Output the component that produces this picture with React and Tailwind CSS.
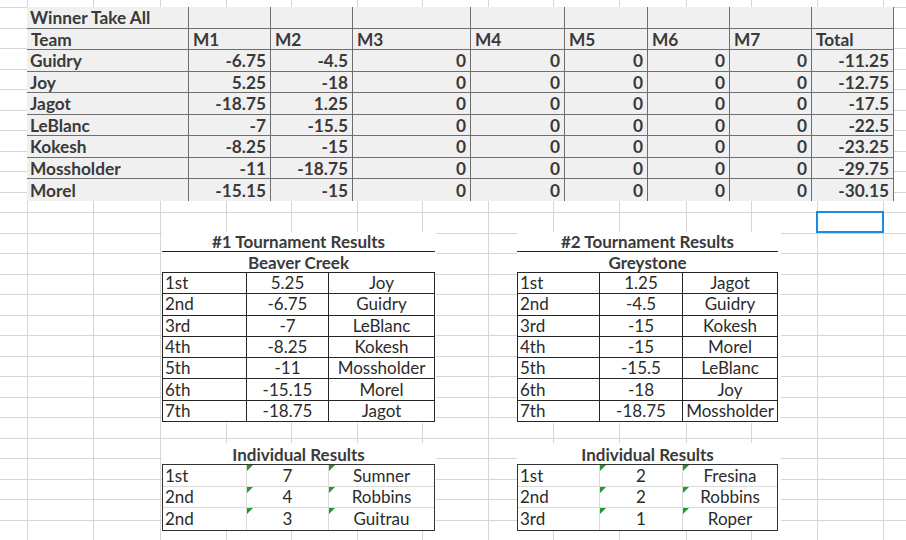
const sheetCols = [28, 66, 67, 66, 65, 66, 65, 66, 65, 66, 67, 65, 66, 66, 40];
const sheetRows = 27;

const winners = [
    ['Guidry', '-6.75', '-4.5', '-11.25'],
    ['Joy', '5.25', '-18', '-12.75'],
    ['Jagot', '-18.75', '1.25', '-17.5'],
    ['LeBlanc', '-7', '-15.5', '-22.5'],
    ['Kokesh', '-8.25', '-15', '-23.25'],
    ['Mossholder', '-11', '-18.75', '-29.75'],
    ['Morel', '-15.15', '-15', '-30.15'],
];

const tournaments = [
    {
        title: '#1 Tournament Results',
        course: 'Beaver Creek',
        cols: 'grid-cols-[84px_82px_106px]',
        width: 'w-[273px]',
        panel: 'w-[274px]',
        rows: [
            ['1st', '5.25', 'Joy'],
            ['2nd', '-6.75', 'Guidry'],
            ['3rd', '-7', 'LeBlanc'],
            ['4th', '-8.25', 'Kokesh'],
            ['5th', '-11', 'Mossholder'],
            ['6th', '-15.15', 'Morel'],
            ['7th', '-18.75', 'Jagot'],
        ],
        indivCols: 'grid-cols-[84px_82px_105px]',
        individual: [
            ['1st', '7', 'Sumner'],
            ['2nd', '4', 'Robbins'],
            ['2nd', '3', 'Guitrau'],
        ],
    },
    {
        title: '#2 Tournament Results',
        course: 'Greystone',
        cols: 'grid-cols-[82px_83px_95px]',
        width: 'w-[261px]',
        panel: 'w-[264px]',
        rows: [
            ['1st', '1.25', 'Jagot'],
            ['2nd', '-4.5', 'Guidry'],
            ['3rd', '-15', 'Kokesh'],
            ['4th', '-15', 'Morel'],
            ['5th', '-15.5', 'LeBlanc'],
            ['6th', '-18', 'Joy'],
            ['7th', '-18.75', 'Mossholder'],
        ],
        indivCols: 'grid-cols-[82px_83px_94px]',
        individual: [
            ['1st', '2', 'Fresina'],
            ['2nd', '2', 'Robbins'],
            ['3rd', '1', 'Roper'],
        ],
    },
];

// excel's little "number stored as text" marker
const GreenFlag = () => (
    <span className="absolute left-0 top-0 h-0 w-0 border-t-[6px] border-r-[6px] border-t-[#1e9a2e] border-r-transparent" />
);

const SheetGrid = () => (
    <div className="absolute inset-0 grid grid-cols-[28px_66px_67px_66px_65px_66px_65px_66px_65px_66px_67px_65px_66px_66px_40px] grid-rows-[8px_repeat(26,20.5px)]">
        {Array.from({ length: sheetRows * sheetCols.length }).map((_, i) => (
            <div key={i} className="border-b border-r border-[#d6d6d6]" />
        ))}
    </div>
);

const WinnerTable = () => {
    const head = ['Team', 'M1', 'M2', 'M3', 'M4', 'M5', 'M6', 'M7', 'Total'];

    return (
        <div className="ml-[27px] mt-[7px] grid w-[867px] grid-cols-[162px_82px_82px_118px_94px_83px_82px_82px_82px] bg-[#f0f0f0] text-[17.3px] font-bold text-[#3a3a3a]">
            <div className="flex h-[21.5px] items-end border-b border-r border-[#6e6e6e] pb-[1px] pl-[3px]">Winner Take All</div>
            {head.slice(1).map(h => (
                <div key={h} className="h-[21.5px] border-b border-r border-[#6e6e6e]" />
            ))}

            {head.map(h => (
                <div key={h} className="flex h-[21.5px] items-end border-b border-r border-[#6e6e6e] pb-[1px] pl-[4px]">
                    {h}
                </div>
            ))}

            {winners.map(([name, m1, m2, total], r) => {
                const last = r === winners.length - 1;
                const edge = last ? 'border-r' : 'border-b border-r';
                const cells = [m1, m2, '0', '0', '0', '0', '0', total];
                return [
                    <div key={name} className={`flex h-[21.5px] items-end ${edge} border-[#6e6e6e] pb-[1px] pl-[3px]`}>
                        {name}
                    </div>,
                    ...cells.map((v, c) => (
                        <div
                            key={name + c}
                            className={`flex h-[21.5px] items-end justify-end ${edge} border-[#6e6e6e] pb-[1px] pr-[4px]`}
                        >
                            {v}
                        </div>
                    )),
                ];
            })}
        </div>
    );
};

const Tournament = ({ t }) => (
    <div className={t.panel}>
        <div className="h-[191px] bg-white">
            <div className={`flex h-[20px] ${t.width} items-center justify-center border-b border-[#262626] font-bold text-[#3a3a3a]`}>
                {t.title}
            </div>
            <div className={`flex h-[20px] ${t.width} items-center justify-center font-bold text-[#3a3a3a]`}>
                {t.course}
            </div>
            <div className={`grid ${t.width} ${t.cols} border-l border-t border-[#262626]`}>
                {t.rows.map(([place, score, name]) => [
                    <div key={place} className="flex h-[21.3px] items-center border-b border-r border-[#262626] pb-[1px] pl-[2px]">
                        {place}
                    </div>,
                    <div key={place + 's'} className="flex h-[21.3px] items-center justify-center border-b border-r border-[#262626] pb-[1px]">
                        {score}
                    </div>,
                    <div key={place + 'n'} className="flex h-[21.3px] items-center justify-center whitespace-nowrap border-b border-r border-[#262626] pb-[1px]">
                        {name}
                    </div>,
                ])}
            </div>
        </div>

        <div className="mt-[20px] h-[88px] bg-white">
            <div className={`flex h-[21px] ${t.width} items-end justify-center pb-[1px] font-bold text-[#3a3a3a]`}>
                Individual Results
            </div>
            <div className={`grid ${t.width} ${t.indivCols} border border-[#333]`}>
                {t.individual.map(([place, score, name], r) => {
                    const line = r < 2 ? 'border-b' : '';
                    return [
                        <div key={r} className={`flex h-[21.5px] items-center ${line} border-r border-[#dadada] pl-[2px]`}>
                            {place}
                        </div>,
                        <div key={r + 's'} className={`relative flex h-[21.5px] items-center justify-center ${line} border-r border-[#dadada]`}>
                            <GreenFlag />
                            {score}
                        </div>,
                        <div key={r + 'n'} className={`relative flex h-[21.5px] items-center justify-center ${line} border-[#dadada]`}>
                            <GreenFlag />
                            {name}
                        </div>,
                    ];
                })}
            </div>
        </div>
    </div>
);

const App = () => {
    return (
        <div className="relative h-[540px] w-[906px] overflow-hidden bg-white font-['Lato',sans-serif] text-[17px] leading-none text-[#2b2b2b]">
            <SheetGrid />

            <div className="relative">
                <WinnerTable />

                <div className="ml-[162px] mt-[31.5px] flex gap-[81px]">
                    {tournaments.map(t => (
                        <Tournament key={t.title} t={t} />
                    ))}
                </div>
            </div>

            {/* active cell */}
            <div className="absolute left-[816px] top-[211px] h-[22px] w-[68px] border-2 border-[#1a8ce6]" />
        </div>
    );
};

export default App;
